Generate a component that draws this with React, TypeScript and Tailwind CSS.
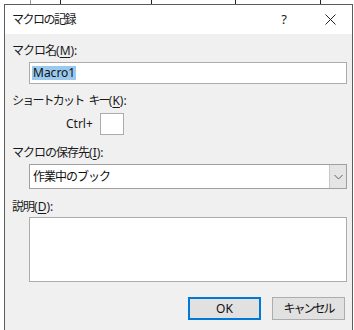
import React from "react"

const font = { fontFamily: '"Noto Sans", "Noto Sans CJK JP", sans-serif' }

function Label({ children, mnemonic, tight }: { children: React.ReactNode; mnemonic: string; tight?: boolean }) {
  return (
    <div className="h-4 leading-4 text-[12px] text-[#1a1a1a] whitespace-pre">
      <span className={tight ? "tracking-[-1.8px]" : "tracking-[-1px]"}>{children}</span>
      (<span className="underline underline-offset-2">{mnemonic}</span>):
    </div>
  )
}

export default function App() {
  return (
    <div className="relative w-[354px] h-[330px] overflow-hidden bg-white" style={font}>
      {/* spreadsheet behind the dialog */}
      <div className="absolute inset-0 flex">
        <div className="w-[31px] border-r border-[#9a9a9a]" />
        <div className="w-[30px] border-r border-[#222]" />
        <div className="w-[91px] border-r border-[#222]" />
        <div className="w-[84px] border-r border-[#222]" />
        <div className="w-[85px] border-r border-[#222]" />
        <div className="flex-1" />
      </div>

      <div className="relative ml-[4px] mt-[4px] w-[349px] h-[330px] border border-[#5c5c5c] bg-[#f0f0f0] flex flex-col">
        {/* title bar */}
        <div className="h-[29px] bg-white flex items-center pl-[7px] pr-[16px] text-[12px] text-[#1a1a1a]">
          <span className="tracking-[-1.5px]">マクロの記録</span>
          <span className="ml-auto mr-[38px] text-[13px]">?</span>
          <svg width="11" height="11" viewBox="0 0 11 11" className="text-[#222]">
            <path d="M0.5 0.5 L10.5 10.5 M10.5 0.5 L0.5 10.5" stroke="currentColor" strokeWidth="1" />
          </svg>
        </div>

        <div className="flex flex-col pl-[7px] pr-[5px]">
          <div className="mt-[9px]">
            <Label mnemonic="M">マクロ名</Label>
          </div>
          <div className="mt-[3px] ml-[17px] h-[22px] bg-white border border-[#acacac] flex items-center pl-[2px]">
            <span className="bg-[#99c9ef] h-[14px] leading-[14px] text-[12px] px-[1px] text-[#111]">Macro1</span>
          </div>

          <div className="mt-[9px]">
            <Label mnemonic="K" tight>
              ショートカット<span className="ml-[5px]">キー</span>
            </Label>
          </div>
          <div className="mt-[4px] flex items-center">
            <span className="ml-[54px] w-[34px] text-[12px] text-[#1a1a1a]">Ctrl+</span>
            <div className="w-[24px] h-[22px] bg-white border border-[#acacac]" />
          </div>

          <div className="mt-[10px]">
            <Label mnemonic="I">マクロの保存先</Label>
          </div>
          <div className="mt-[3px] ml-[17px] h-[25px] bg-white border border-[#a0a0a0] flex items-stretch">
            <span className="flex-1 flex items-center pl-[3px] text-[12px] tracking-[-1px] text-[#111]">作業中のブック</span>
            <div className="w-[17px] bg-[#e5e5e5] border-l border-[#c8c8c8] flex items-center justify-center">
              <svg width="9" height="6" viewBox="0 0 9 6">
                <path d="M0.5 1 L4.5 5 L8.5 1" fill="none" stroke="#606060" strokeWidth="1" />
              </svg>
            </div>
          </div>

          <div className="mt-[10px]">
            <Label mnemonic="D">説明</Label>
          </div>
          <div className="mt-[2px] ml-[17px] h-[65px] bg-white border border-[#acacac]" />

          <div className="mt-[15px] flex justify-end gap-[11px] pr-[2px]">
            <button className="w-[73px] h-[23px] bg-[#e1e1e1] border-2 border-[#0078d7] text-[12px] text-[#111]">OK</button>
            <button className="w-[73px] h-[23px] bg-[#e1e1e1] border border-[#adadad] text-[12px] tracking-[-2px] text-[#111]">キャンセル</button>
          </div>
        </div>
      </div>
    </div>
  )
}
